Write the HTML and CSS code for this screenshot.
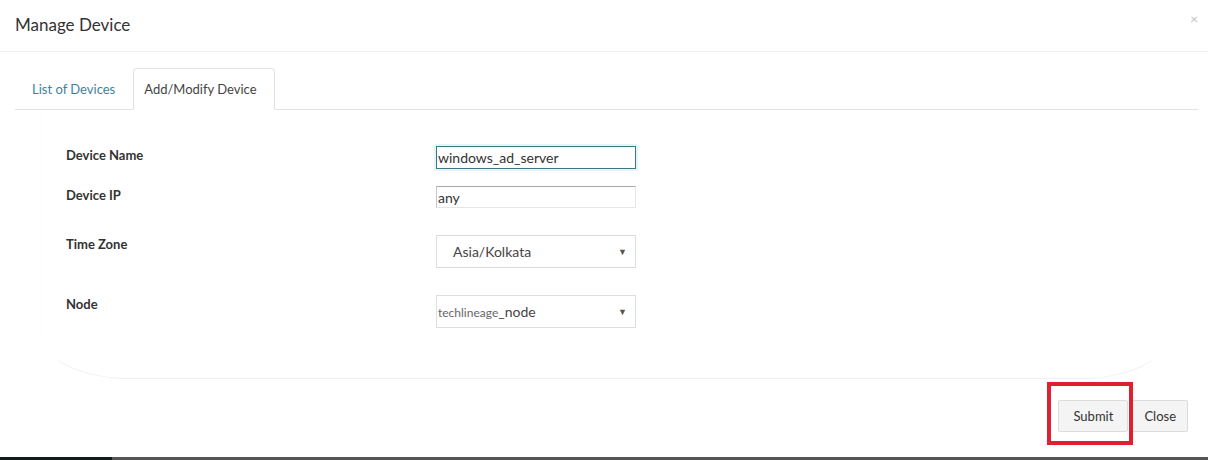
FILE: index.html
```html
<!DOCTYPE html>
<html lang="en">

<head>
    <meta charset="UTF-8">
    <meta name="viewport" content="width=device-width, initial-scale=1.0">
    <title>Manage Device</title>
    <link rel="stylesheet" href="styles.css">
</head>

<body>
    <div class="modal">
        <div class="modal-header">
            <h4 class="modal-title">Manage Device</h4>
            <span class="close">&times;</span>
        </div>

        <div class="modal-body">
            <ul class="nav-tabs">
                <li class="tab"><a class="tab-link">List of Devices</a></li>
                <li class="tab active"><a class="tab-link">Add/Modify Device</a></li>
            </ul>

            <div class="tab-panel">
                <div class="form-row">
                    <label class="form-label">Device Name</label>
                    <input class="text-input focused" type="text" value="windows_ad_server">
                </div>
                <div class="form-row spaced">
                    <label class="form-label">Device IP</label>
                    <input class="text-input inset" type="text" value="any">
                </div>
                <div class="form-row spaced">
                    <label class="form-label">Time Zone</label>
                    <div class="select-box">
                        <span class="select-text">Asia/Kolkata</span>
                        <span class="caret">&#9660;</span>
                    </div>
                </div>
                <div class="form-row">
                    <label class="form-label">Node</label>
                    <div class="select-box node">
                        <span class="select-text"><span class="small">techlineage</span>_node</span>
                        <span class="caret">&#9660;</span>
                    </div>
                </div>
            </div>
        </div>

        <div class="modal-footer">
            <div class="highlight-wrap">
                <button class="btn submit">Submit</button>
                <span class="highlight"></span>
            </div>
            <button class="btn">Close</button>
        </div>
    </div>

    <div class="taskbar">
        <div class="taskbar-start"></div>
        <div class="taskbar-rest"></div>
    </div>
</body>

</html>
```

FILE: styles.css
```css
/* Base */
* {
    margin: 0;
    padding: 0;
    box-sizing: border-box;
}

body {
    background: #ffffff;
    font-family: 'Lato', 'Open Sans', sans-serif;
    color: #333;
    height: 460px;
    overflow: hidden;
}

/* Header */
.modal-header {
    display: flex;
    justify-content: space-between;
    align-items: flex-start;
    height: 52px;
    padding: 14px 15px 0 15px;
    border-bottom: 1px solid #f2f2f2;
}

.modal-title {
    font-size: 17px;
    font-weight: normal;
    color: #333;
}

.close {
    font-size: 14px;
    color: #c4c4c4;
    line-height: 1;
    margin-top: -2px;
    margin-right: -5px;
}

/* Tabs */
.modal-body {
    padding: 16px 10px 0 15px;
}

.nav-tabs {
    list-style: none;
    display: flex;
    border-bottom: 1px solid #e2e2e2;
}

.tab {
    margin-right: 2px;
    margin-bottom: -1px;
}

.tab-link {
    display: block;
    height: 42px;
    padding: 12px 15px 0 16px;
    font-size: 13px;
    color: #3f7f9e;
    border: 1px solid transparent;
    border-radius: 4px 4px 0 0;
}

.tab.active .tab-link {
    color: #444;
    background: #fff;
    border-color: #e2e2e2;
    border-bottom-color: #fff;
    padding: 12px 17px 0 10px;
}

/* Form panel */
.tab-panel {
    margin: 0 28px 0 25px;
    padding: 36px 0 50px 25px;
    border: 1px solid transparent;
    border-bottom-color: #f2f2f2;
    border-left-color: #fdfdfd;
    border-right-color: #fdfdfd;
    border-top: none;
    border-radius: 0 0 90px 90px / 0 0 45px 45px;
}

.form-row {
    display: flex;
    align-items: flex-start;
    margin-bottom: 17px;
}

.form-row.spaced {
    margin-bottom: 27px;
}

.form-row:last-child {
    margin-bottom: 0;
}

.form-label {
    width: 370px;
    padding-top: 1px;
    font-size: 13px;
    font-weight: bold;
    color: #333;
}

.text-input {
    width: 200px;
    height: 23px;
    padding: 0 1px;
    font-family: 'Lato', 'Open Sans', sans-serif;
    font-size: 14px;
    color: #333;
    background: #fff;
    outline: none;
}

.text-input.focused {
    border: 1px solid #3b7785;
    box-shadow: 0 0 0 2px #e4f6f9;
}

.text-input.inset {
    height: 22px;
    border: 1px solid #e6e6e6;
    border-top-color: #a9a9a9;
    border-left-color: #c9c9c9;
}

.select-box {
    display: flex;
    align-items: center;
    justify-content: space-between;
    width: 200px;
    height: 33px;
    padding: 0 8px 0 16px;
    border: 1px solid #dedede;
    font-size: 14px;
    color: #444;
}

.select-box.node {
    padding-left: 1px;
}

.select-text .small {
    font-size: 12px;
    color: #666;
}

.caret {
    font-size: 9px;
    color: #555;
}

/* Footer */
.modal-footer {
    display: flex;
    justify-content: flex-end;
    gap: 4px;
    padding: 21px 20px 0 0;
}

.btn {
    height: 32px;
    padding: 0 11px;
    font-family: 'Lato', 'Open Sans', sans-serif;
    font-size: 13px;
    color: #333;
    background: #f4f4f4;
    border: 1px solid #dcdcdc;
    border-radius: 2px;
}

.btn.submit {
    padding: 0 14px;
}

.highlight-wrap {
    position: relative;
    display: flex;
}

.highlight {
    position: absolute;
    left: -11px;
    top: -18px;
    width: 86px;
    height: 63px;
    border: 4px solid #e0202e;
}

/* Bottom bar */
.taskbar {
    display: flex;
    height: 4px;
    margin-top: 25px;
}

.taskbar-start {
    width: 112px;
    background: #0f1c1c;
}

.taskbar-rest {
    flex: 1;
    background: #555;
}
```
